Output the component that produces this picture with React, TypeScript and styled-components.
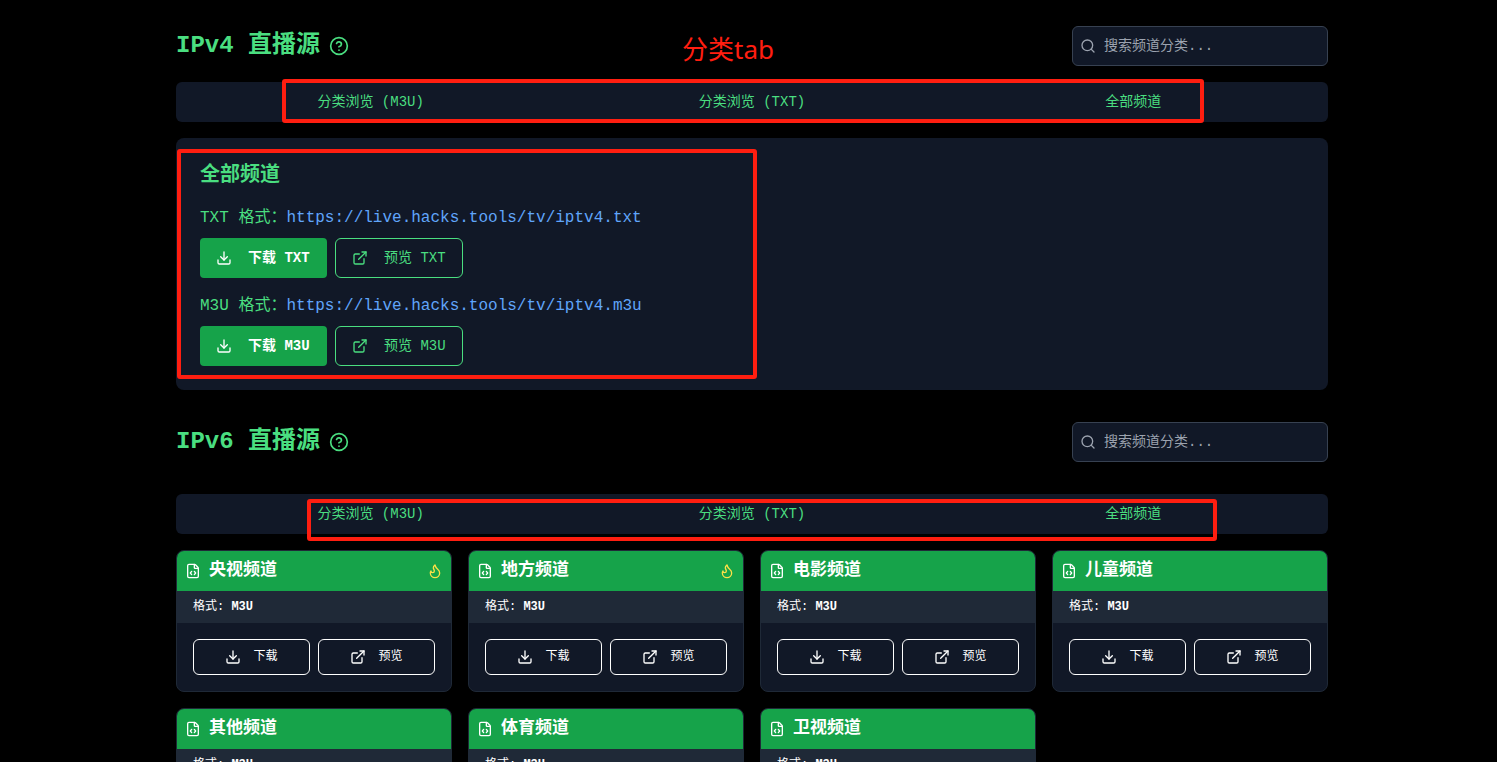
import React from 'react';
import styled, { createGlobalStyle, css } from 'styled-components';
import { CircleHelp, Download, ExternalLink, FileCode, Flame, Search } from 'lucide-react';

const green = '#4ade80';
const solidGreen = '#16a34a';
const panel = '#111827';
const panelLight = '#1f2937';

const GlobalStyle = createGlobalStyle`
  *, *::before, *::after { box-sizing: border-box; }
  body {
    margin: 0;
    background: #000;
    color: ${green};
    font-family: "Liberation Mono", "Noto Sans CJK SC", monospace;
    font-size: 16px;
    line-height: 24px;
  }
  h2, h3, p { margin: 0; }
  button, input { font-family: inherit; }
`;

const Page = styled.div`
  padding: 26px 0 32px 7px;
`;

const Container = styled.main`
  position: relative;
  max-width: 1152px;
  margin: 0 auto;
  display: flex;
  flex-direction: column;
  gap: 32px;
`;

const Section = styled.section`
  display: flex;
  flex-direction: column;
  gap: 16px;
`;

const SectionHeader = styled.header<{ $spaced?: boolean }>`
  display: flex;
  justify-content: space-between;
  align-items: center;
  margin-bottom: ${(p) => (p.$spaced ? '16px' : '0')};
`;

const SectionTitle = styled.h2`
  display: flex;
  align-items: center;
  gap: 9px;
  font-size: 24px;
  line-height: 32px;
  font-weight: 700;
`;

const SearchBox = styled.label`
  display: flex;
  align-items: center;
  gap: 8px;
  width: 256px;
  height: 40px;
  padding: 0 7px;
  background: ${panel};
  border: 1px solid #374151;
  border-radius: 6px;
  color: #9ca3af;
`;

const SearchInput = styled.input`
  flex: 1;
  min-width: 0;
  padding: 0;
  border: 0;
  outline: 0;
  background: transparent;
  color: ${green};
  font-size: 14px;
  line-height: 20px;
  &::placeholder { color: #9ca3af; opacity: 1; }
`;

const TabList = styled.div`
  display: grid;
  grid-template-columns: repeat(3, 1fr);
  height: 40px;
  padding: 4px;
  background: ${panel};
  border-radius: 6px;
`;

const Tab = styled.button`
  padding: 0 12px;
  border: 0;
  background: transparent;
  color: ${green};
  font-size: 14px;
  line-height: 20px;
`;

const Panel = styled.div`
  display: flex;
  flex-direction: column;
  gap: 16px;
  padding: 24px;
  background: ${panel};
  border-radius: 8px;
`;

const PanelTitle = styled.h3`
  font-size: 20px;
  line-height: 28px;
  font-weight: 700;
`;

const Source = styled.div`
  display: flex;
  flex-direction: column;
  gap: 8px;
`;

const SourceLink = styled.a`
  color: #60a5fa;
  text-decoration: none;
`;

const Actions = styled.div`
  display: flex;
  gap: 8px;
`;

const ActionButton = styled.button<{ $solid?: boolean }>`
  display: inline-flex;
  align-items: center;
  gap: 16px;
  min-width: 127px;
  height: 40px;
  padding: 0 16px;
  font-size: 14px;
  line-height: 20px;
  white-space: nowrap;
  ${(p) =>
    p.$solid
      ? css`
          border: 0;
          border-radius: 4px;
          background: ${solidGreen};
          color: #fff;
          font-weight: 700;
        `
      : css`
          border: 1px solid ${green};
          border-radius: 6px;
          background: transparent;
          color: ${green};
        `}
`;

const CardGrid = styled.div`
  display: grid;
  grid-template-columns: repeat(4, 1fr);
  gap: 16px;
`;

const Card = styled.article`
  overflow: hidden;
  background: ${panel};
  border: 1px solid ${panelLight};
  border-radius: 8px;
  color: #fff;
`;

const CardHeader = styled.div`
  display: flex;
  align-items: center;
  gap: 8px;
  height: 40px;
  padding: 0 8px;
  background: ${solidGreen};
`;

const CardTitle = styled.h3`
  flex: 1;
  font-size: 17px;
  line-height: 24px;
  font-weight: 700;
`;

const CardFormat = styled.p`
  padding: 8px 16px;
  background: ${panelLight};
  font-size: 12px;
  line-height: 16px;
`;

const CardActions = styled.div`
  display: grid;
  grid-template-columns: 1fr 1fr;
  gap: 8px;
  padding: 16px;
`;

const CardButton = styled.button`
  display: flex;
  align-items: center;
  justify-content: center;
  gap: 12px;
  height: 36px;
  padding: 0 12px;
  border: 1px solid #fff;
  border-radius: 6px;
  background: transparent;
  color: #fff;
  font-size: 12px;
  line-height: 16px;
`;

const Highlight = styled.div<{ $x: number; $y: number; $w: number; $h: number }>`
  position: absolute;
  left: ${(p) => p.$x}px;
  top: ${(p) => p.$y}px;
  width: ${(p) => p.$w}px;
  height: ${(p) => p.$h}px;
  border: 4px solid #ff1e10;
  border-radius: 3px;
  pointer-events: none;
`;

const Note = styled.div`
  position: absolute;
  left: 506px;
  top: 5px;
  color: #ff1e10;
  font-family: "Noto Sans", "Noto Sans CJK SC", sans-serif;
  font-size: 26px;
  line-height: 36px;
  white-space: nowrap;
`;

const tabs = ['分类浏览 (M3U)', '分类浏览 (TXT)', '全部频道'];

const sources = [
  { format: 'TXT', url: 'https://live.hacks.tools/tv/iptv4.txt' },
  { format: 'M3U', url: 'https://live.hacks.tools/tv/iptv4.m3u' },
];

const channels = [
  { name: '央视频道', hot: true },
  { name: '地方频道', hot: true },
  { name: '电影频道', hot: false },
  { name: '儿童频道', hot: false },
  { name: '其他频道', hot: false },
  { name: '体育频道', hot: false },
  { name: '卫视频道', hot: false },
];

function Header({ title, spaced }: { title: string; spaced?: boolean }) {
  return (
    <SectionHeader $spaced={spaced}>
      <SectionTitle>
        {title}
        <CircleHelp size={20} />
      </SectionTitle>
      <SearchBox>
        <Search size={16} />
        <SearchInput type="text" placeholder="搜索频道分类..." aria-label={`${title} 搜索`} />
      </SearchBox>
    </SectionHeader>
  );
}

function Tabs({ active }: { active: number }) {
  return (
    <TabList role="tablist">
      {tabs.map((label, i) => (
        <Tab key={label} type="button" role="tab" aria-selected={i === active}>
          {label}
        </Tab>
      ))}
    </TabList>
  );
}

export default function App() {
  return (
    <>
      <GlobalStyle />
      <Page>
        <Container>
          <Section>
            <Header title="IPv4 直播源" />
            <Tabs active={2} />
            <Panel role="tabpanel">
              <PanelTitle>全部频道</PanelTitle>
              {sources.map((s) => (
                <Source key={s.format}>
                  <p>
                    {s.format} 格式：<SourceLink href={s.url}>{s.url}</SourceLink>
                  </p>
                  <Actions>
                    <ActionButton type="button" $solid>
                      <Download size={16} />
                      <span>下载 {s.format}</span>
                    </ActionButton>
                    <ActionButton type="button">
                      <ExternalLink size={16} />
                      <span>预览 {s.format}</span>
                    </ActionButton>
                  </Actions>
                </Source>
              ))}
            </Panel>
          </Section>

          <Section>
            <Header title="IPv6 直播源" spaced />
            <Tabs active={0} />
            <CardGrid role="tabpanel">
              {channels.map((c) => (
                <Card key={c.name}>
                  <CardHeader>
                    <FileCode size={16} />
                    <CardTitle>{c.name}</CardTitle>
                    {c.hot && <Flame size={16} color="#fde047" />}
                  </CardHeader>
                  <CardFormat>
                    格式: <b>M3U</b>
                  </CardFormat>
                  <CardActions>
                    <CardButton type="button">
                      <Download size={16} />
                      下载
                    </CardButton>
                    <CardButton type="button">
                      <ExternalLink size={16} />
                      预览
                    </CardButton>
                  </CardActions>
                </Card>
              ))}
            </CardGrid>
          </Section>

          <Note>分类tab</Note>
          <Highlight $x={106} $y={53} $w={922} $h={44} />
          <Highlight $x={1} $y={123} $w={580} $h={230} />
          <Highlight $x={131} $y={473} $w={910} $h={42} />
        </Container>
      </Page>
    </>
  );
}
